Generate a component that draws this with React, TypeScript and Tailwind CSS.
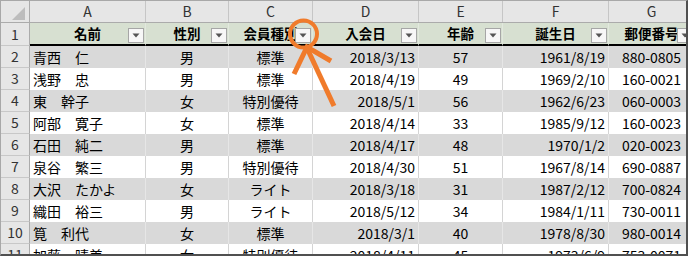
import React from "react";

type Align = "left" | "center" | "right";
const cols: { w: number; letter: string; head: string; align: Align }[] = [
  { w: 116, letter: "A", head: "名前", align: "left" },
  { w: 83, letter: "B", head: "性別", align: "center" },
  { w: 84, letter: "C", head: "会員種別", align: "center" },
  { w: 106, letter: "D", head: "入会日", align: "right" },
  { w: 84, letter: "E", head: "年齢", align: "center" },
  { w: 106, letter: "F", head: "誕生日", align: "right" },
  { w: 86, letter: "G", head: "郵便番号", align: "center" },
];

const rows: string[][] = [
  ["青西　仁", "男", "標準", "2018/3/13", "57", "1961/8/19", "880-0805"],
  ["浅野　忠", "男", "標準", "2018/4/19", "49", "1969/2/10", "160-0021"],
  ["東　幹子", "女", "特別優待", "2018/5/1", "56", "1962/6/23", "060-0003"],
  ["阿部　寛子", "女", "標準", "2018/4/14", "33", "1985/9/12", "160-0023"],
  ["石田　純二", "男", "標準", "2018/4/17", "48", "1970/1/2", "020-0023"],
  ["泉谷　繁三", "男", "特別優待", "2018/4/30", "51", "1967/8/14", "690-0887"],
  ["大沢　たかよ", "女", "ライト", "2018/3/18", "31", "1987/2/12", "700-0824"],
  ["織田　裕三", "男", "ライト", "2018/5/12", "34", "1984/1/11", "730-0011"],
  ["筧　利代", "女", "標準", "2018/3/1", "40", "1978/8/30", "980-0014"],
  ["加藤　晴美", "女", "特別優待", "2018/4/11", "45", "1973/6/9", "753-0071"],
];

const font = { fontFamily: '"Noto Sans CJK JP", "Noto Sans", sans-serif' };

function alignCls(a: Align) {
  if (a === "left") return "justify-start pl-[3px]";
  if (a === "right") return "justify-end pr-[3px]";
  return "justify-center";
}

function FilterButton() {
  return (
    <div className="absolute right-[1px] top-[5px] w-[16px] h-[15px] border border-[#a6a6a6] bg-[#f7f7f7] flex items-center justify-center">
      <svg width="8" height="5" viewBox="0 0 8 5">
        <polygon points="0.5,0.5 7.5,0.5 4,4.5" fill="#555" />
      </svg>
    </div>
  );
}

export default function App() {
  return (
    <div className="w-[690px] h-[258px] bg-white relative" style={font}>
      <div className="w-[688px] h-[256px] border-l border-t border-[#a8a8a8] border-r-2 border-b-2 border-r-[#505050] border-b-[#505050] overflow-hidden">
        <div className="flex flex-col w-[800px]">
          <div className="flex h-[22px] bg-[#e6e6e6] border-b border-[#ababab]">
            <div className="w-[29px] shrink-0 border-r border-[#ababab] relative">
              <svg className="absolute right-[4px] bottom-[2px]" width="13" height="13" viewBox="0 0 13 13">
                <polygon points="13,0 13,13 0,13" fill="#bdbdbd" />
              </svg>
            </div>
            {cols.map((c) => (
              <div
                key={c.letter}
                className="shrink-0 border-r border-[#c6c6c6] flex items-center justify-center text-[14px] text-[#333]"
                style={{ width: c.w }}
              >
                {c.letter}
              </div>
            ))}
          </div>
          <div className="flex h-[23px]">
            <div className="w-[29px] shrink-0 h-[23px] bg-[#e6e6e6] border-r border-b border-[#ababab] border-b-[#c8c8c8] flex items-center justify-center text-[14px] text-[#333]">
              1
            </div>
            {cols.map((c) => (
              <div
                key={c.head}
                className="shrink-0 relative h-[23px] bg-[#d7e0d1] border-r border-[#e2e8de] border-b-2 border-b-black flex items-center justify-center text-[13.5px] font-bold text-black pb-[1px]"
                style={{ width: c.w }}
              >
                <span className="whitespace-nowrap">{c.head}</span>
                <FilterButton />
              </div>
            ))}
          </div>
          {rows.map((r, i) => {
            const gray = i % 2 === 0;
            return (
              <div key={i} className="flex h-[22px]">
                <div className="w-[29px] shrink-0 bg-[#e6e6e6] border-r border-b border-[#ababab] border-b-[#c8c8c8] flex items-center justify-center text-[14px] text-[#333]">
                  {i + 2}
                </div>
                {cols.map((c, j) => (
                  <div
                    key={j}
                    className={`shrink-0 flex items-center text-[14px] text-black whitespace-nowrap ${alignCls(c.align)} ${
                      gray ? "bg-[#d9d9d9] border-r border-[#e6e6e6]" : "bg-white border-r border-[#d4d4d4]"
                    }`}
                    style={{ width: c.w }}
                  >
                    {r[j]}
                  </div>
                ))}
              </div>
            );
          })}
        </div>
      </div>
      <svg className="absolute left-0 top-0 pointer-events-none" width="690" height="258" viewBox="0 0 690 258">
        <circle cx="303.5" cy="34" r="13.5" fill="none" stroke="#f07b2b" strokeWidth="4" />
        <line x1="307" y1="48" x2="334" y2="106" stroke="#f07b2b" strokeWidth="5" />
        <polyline
          points="294,74 307,47 331,61"
          fill="none"
          stroke="#f07b2b"
          strokeWidth="5"
          strokeLinejoin="miter"
        />
      </svg>
    </div>
  );
}
